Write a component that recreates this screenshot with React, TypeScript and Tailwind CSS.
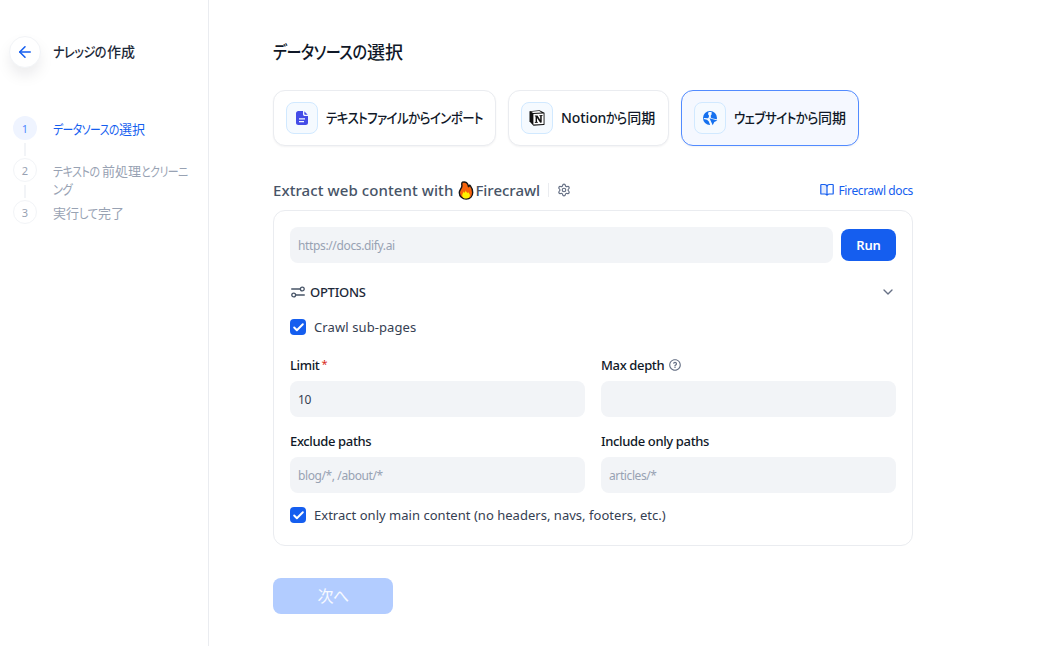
import type { ReactNode } from 'react';
import { ArrowLeft, Check as CheckMark, ChevronDown, Settings } from 'lucide-react';
import { RiQuestionLine } from 'react-icons/ri';

function FileIcon() {
  return (
    <svg width="16" height="16" viewBox="0 0 16 16" fill="none">
      <path
        fill="#444CE7"
        fillRule="evenodd"
        d="M9 1v3.2C9 5.2 9.8 6 10.8 6H14v6.7c0 1.3-1 2.3-2.300 2.300H4.300C3 15 2 14 2 12.700V3.300C2 2 3 1 4.300 1zM5 8.300v1.200h6V8.300zM5 11v1.200h5V11z"
      />
      <path fill="#444CE7" d="M10.300 1.300 13.700 4.700H11c-.4 0-.7-.3-.7-.7z" />
    </svg>
  );
}

function NotionIcon() {
  return (
    <svg width="18" height="18" viewBox="0 0 18 18" fill="none">
      <path
        fill="#111"
        d="M1.500 2.200 11.500 1.300 16.500 3.800v11.400q0 .8-.8.900L5.500 16.700 1.500 12.500z"
      />
      <path fill="#fff" d="M3 2.800 11.200 2.100 13.800 3.500 5.200 4.100zM5.400 5.100 15.600 4.500v10.400L5.400 15.600z" />
      <path
        fill="#111"
        d="M6.800 6.600 9.500 6.400 12.200 10.800V7.200l-.8-.2v-.7l3.200-.2v.7l-.9.300v6.500l-1.500.1L9 9v3.800l.9.200v.7l-3.100.2v-.7l.8-.3V7.600L6.800 7.300z"
      />
    </svg>
  );
}

function GlobeIcon() {
  return (
    <svg width="16" height="16" viewBox="0 0 16 16" fill="none">
      <circle cx="8" cy="8" r="7" fill="#1570EF" />
      <path
        fill="#F5FAFF"
        d="M6.600 1.900h3v2.500l-.8 1v2l.9.800 5.800 1.200V16H8.500L6.800 11.600 5 9.800 1.700 8.900 2 7.900l4 .4.900-1.200V5.200l-.9-1z"
      />
      <path fill="#1570EF" d="M7.500 8.200 15.400 10.600 12.300 12.100 10.700 15.300z" />
    </svg>
  );
}

function FireIcon() {
  return (
    <svg width="16" height="19" viewBox="0 0 16 19" fill="none">
      <path
        fill="#F7630C"
        stroke="#151515"
        strokeWidth="1.400"
        strokeLinejoin="round"
        d="M4.500 1.200C7.500.2 10 2.200 10.300 5c.1 1 .7.900.9-.2.100-.6.700-.7 1.100-.1 1.500 2 2.400 4.400 2.400 6.700 0 4-2.800 6.600-6.500 6.600S1.300 15.600 1.300 11.800C1.300 8.900 3.700 7.800 3.900 5c.1-1.500-.8-2.900.6-3.800z"
      />
      <path
        fill="#FFF200"
        d="M7.500 9.300c.3 1.500 1.500 1.700 1.700 3 .4-.4.700-.9.700-1.300 1.200 1 2 2.200 2 3.500 0 1.900-1.600 3-3.800 3s-3.900-1.100-3.900-3.100c0-1.600 1.300-2.700 1.500-3.800.4.400.7.900.8 1.400.7-.7 1-1.600 1-2.700z"
      />
    </svg>
  );
}

function BookIcon() {
  return (
    <svg width="14" height="14" viewBox="0 0 14 14" fill="none">
      <path fill="#155EEF" fillOpacity="0.12" d="M1 1.500h3.500C6 1.500 7 2.500 7 4v8L5.500 11H1z" />
      <path
        stroke="#155EEF"
        strokeWidth="1.200"
        strokeLinejoin="round"
        d="M7 12.200 6.500 11.600Q6 11 5 11H1.300Q.8 11 .8 10.400V2.100q0-.6.6-.6H4.500Q7 1.500 7 4zm0 0 .5-.6Q8 11 9 11h3.700q.5 0 .5-.6V2.100q0-.6-.6-.6H9.500Q7 1.500 7 4z"
      />
    </svg>
  );
}

function OptionsIcon() {
  return (
    <svg width="16" height="16" viewBox="0 0 16 16" fill="none" stroke="#475467" strokeWidth="1.300" strokeLinecap="round">
      <path d="M1.700 5h8.600M5.700 11h8.600" />
      <circle cx="12.300" cy="5" r="1.900" />
      <circle cx="3.700" cy="11" r="1.900" />
    </svg>
  );
}

/* Condensed kana run: the box has the condensed width, the glyphs are scaled into it. */
function Kana({ width, scale = 'scale-x-[0.87]', children }: { width: string; scale?: string; children: ReactNode }) {
  return (
    <span className={`${width} inline-block whitespace-nowrap`}>
      <span className={`${scale} inline-block origin-left tracking-[-0.6px]`}>{children}</span>
    </span>
  );
}

type SourceProps = { icon: ReactNode; width: string; active?: boolean; children: ReactNode };

function SourceCard({ icon, width, active, children }: SourceProps) {
  return (
    <button
      className={`${width} flex h-14 items-center rounded-xl border pl-3 whitespace-nowrap shadow-[0_1px_2px_rgba(16,24,40,0.05)] ${
        active ? 'border-[#528bff] bg-[#f5f8ff]' : 'border-[#eaecf0] bg-white'
      }`}
    >
      <span className="mr-2 flex size-8 shrink-0 items-center justify-center rounded-lg border border-[#d1e9ff] bg-[#f5faff]">
        {icon}
      </span>
      <span className="pb-0.5">{children}</span>
    </button>
  );
}

function Step({ n, label, active }: { n: number; label: ReactNode; active?: boolean }) {
  return (
    <div className="flex h-[42px] gap-4">
      <div className="flex w-6 shrink-0 flex-col items-center">
        <span
          className={`flex size-6 shrink-0 items-center justify-center rounded-full pt-0.5 text-[11px] ${
            active ? 'bg-[#eff4ff] text-[#528bff]' : 'border border-[#f2f4f7] text-[#98a2b3]'
          }`}
        >
          {n}
        </span>
        {n < 3 && <span className="mt-[3px] h-[13px] w-0.5 bg-[#f2f4f7]" />}
      </div>
      <div
        className={`pt-1 text-[13px] leading-[18px] whitespace-nowrap ${active ? 'text-[#155eef]' : 'text-[#98a2b3]'}`}
      >
        {label}
      </div>
    </div>
  );
}

function Check({ children }: { children: ReactNode }) {
  return (
    <label className="flex h-5 items-center gap-2 text-[13px] text-[#354052]">
      <span className="flex size-4 items-center justify-center rounded bg-[#155eef] text-white">
        <CheckMark size={13} strokeWidth={3.6} />
      </span>
      <span className="pt-0.5 tracking-[0.025px]">{children}</span>
    </label>
  );
}

function Field({ label, value, placeholder }: { label: ReactNode; value?: string; placeholder?: string }) {
  return (
    <div className="flex-1">
      <div className="flex h-[18px] items-center pt-0.5 text-[13px] font-medium tracking-[-0.36px] text-[#101828]">
        {label}
      </div>
      <input
        className="mt-[7px] block h-9 w-full rounded-lg bg-[#f2f4f7] px-2 pt-px text-[12px] tracking-[-0.4px] text-[#354052] outline-none placeholder:text-[#98a2b3]"
        defaultValue={value}
        placeholder={placeholder}
      />
    </div>
  );
}

export default function App() {
  return (
    <div className="flex h-[646px] w-[1050px] overflow-hidden bg-white font-['Noto_Sans','Noto_Sans_CJK_JP',sans-serif]">
      <aside className="w-[209px] shrink-0 border-r border-[#eaecf0]">
        <div className="flex h-[104px] items-center pl-[9px]">
          <button className="flex size-8 items-center justify-center rounded-full border border-[#f2f4f7] bg-white text-[#155eef] shadow-[0_8px_16px_-2px_rgba(16,24,40,0.1)]">
            <ArrowLeft size={18} strokeWidth={2.1} />
          </button>
          <h2 className="ml-3 pb-0.5 text-[14px] font-medium whitespace-nowrap text-[#1d2939] [font-feature-settings:'palt']">
            <Kana width="w-[54px]">ナレッジの</Kana>作成
          </h2>
        </div>
        <nav className="mt-3 pl-[13px] [font-feature-settings:'palt']">
          <Step
            n={1}
            active
            label={
              <>
                <Kana width="w-[66px]" scale="scale-x-[0.83]">
                  データソースの
                </Kana>
                選択
              </>
            }
          />
          <Step
            n={2}
            label={
              <>
                <Kana width="w-[49px]" scale="scale-x-[0.85]">
                  テキストの
                </Kana>
                前処理
                <Kana width="w-[47px]" scale="scale-x-[0.84]">
                  とクリーニ
                </Kana>
                <br />
                <Kana width="w-[22px]">ング</Kana>
              </>
            }
          />
          <Step
            n={3}
            label={
              <>
                実行<Kana width="w-[19px]">して</Kana>完了
              </>
            }
          />
        </nav>
      </aside>

      <main className="w-[704px] shrink-0 pl-16">
        <h1 className="mt-10 h-6 text-[18px] leading-6 font-medium text-[#101828] [font-feature-settings:'palt']">
          <Kana width="w-[94px]" scale="scale-x-[0.84]">
            データソースの
          </Kana>
          選択
        </h1>

        <div className="mt-[26px] flex gap-3 text-[14px] font-medium text-[#101828] [font-feature-settings:'palt']">
          <SourceCard width="w-[223px]" icon={<FileIcon />}>
            <Kana width="w-[158px]" scale="scale-x-[0.888]">
              テキストファイルからインポート
            </Kana>
          </SourceCard>
          <SourceCard width="w-[161px]" icon={<NotionIcon />}>
            <span className="tracking-[-0.1px]">Notion</span>
            <Kana width="w-[21px]" scale="scale-x-[0.84]">
              から
            </Kana>
            同期
          </SourceCard>
          <SourceCard width="w-[178px]" active icon={<GlobeIcon />}>
            <Kana width="w-[84px]" scale="scale-x-[0.895]">
              ウェブサイトから
            </Kana>
            同期
          </SourceCard>
        </div>

        <div className="mt-8 flex h-6 items-center justify-between">
          <div className="flex items-center text-[15px] font-medium whitespace-nowrap text-[#475467]">
            <span className="tracking-[0.08px]">Extract web content with</span>
            <span className="ml-[5px]">
              <FireIcon />
            </span>
            <span className="ml-px">Firecrawl</span>
            <span className="mx-2 h-3.5 w-px bg-[#eaecf0]" />
            <Settings size={14} strokeWidth={2} className="text-[#667085]" />
          </div>
          <a className="flex items-center gap-[5px] text-[12px] text-[#155eef]">
            <BookIcon />
            <span className="pt-0.5 tracking-[-0.38px]">Firecrawl docs</span>
          </a>
        </div>

        <section className="mt-2 h-[336px] rounded-xl border border-[#eaecf0] p-4">
          <div className="flex items-center gap-2">
            <input
              className="h-9 w-[543px] rounded-lg bg-[#f2f4f7] px-2 pt-px text-[12px] tracking-[-0.36px] outline-none placeholder:text-[#98a2b3]"
              placeholder="https://docs.dify.ai"
            />
            <button className="h-8 w-[55px] rounded-lg bg-[#155eef] pt-px text-[13px] font-semibold tracking-[-0.2px] text-white">
              Run
            </button>
          </div>

          <div className="mt-[19px] flex h-5 items-center text-[#1d2939]">
            <OptionsIcon />
            <span className="ml-1 pt-0.5 text-[13px] font-medium tracking-[-0.25px]">OPTIONS</span>
            <ChevronDown size={16} strokeWidth={2} className="ml-auto text-[#667085]" />
          </div>

          <div className="mt-[15px]">
            <Check>
              <span className="tracking-[0.1px]">Crawl sub-pages</span>
            </Check>
          </div>

          <div className="mt-[19px] flex gap-4">
            <Field
              value="10"
              label={
                <>
                  <span>Limit</span>
                  <span className="ml-0.5 pb-1 text-[11px] font-normal text-[#d92d20]">*</span>
                </>
              }
            />
            <Field
              label={
                <>
                  <span>Max depth</span>
                  <RiQuestionLine size={14} className="mb-0.5 ml-1 text-[#667085]" />
                </>
              }
            />
          </div>
          <div className="mt-[15px] flex gap-4">
            <Field label={<span>Exclude paths</span>} placeholder="blog/*, /about/*" />
            <Field label={<span>Include only paths</span>} placeholder="articles/*" />
          </div>
          <div className="mt-3">
            <Check>Extract only main content (no headers, navs, footers, etc.)</Check>
          </div>
        </section>

        <button className="mt-8 block h-9 w-[120px] rounded-lg bg-[#b2ccff] text-[16px] tracking-[-0.5px] text-white/90">
          次へ
        </button>
      </main>
    </div>
  );
}
